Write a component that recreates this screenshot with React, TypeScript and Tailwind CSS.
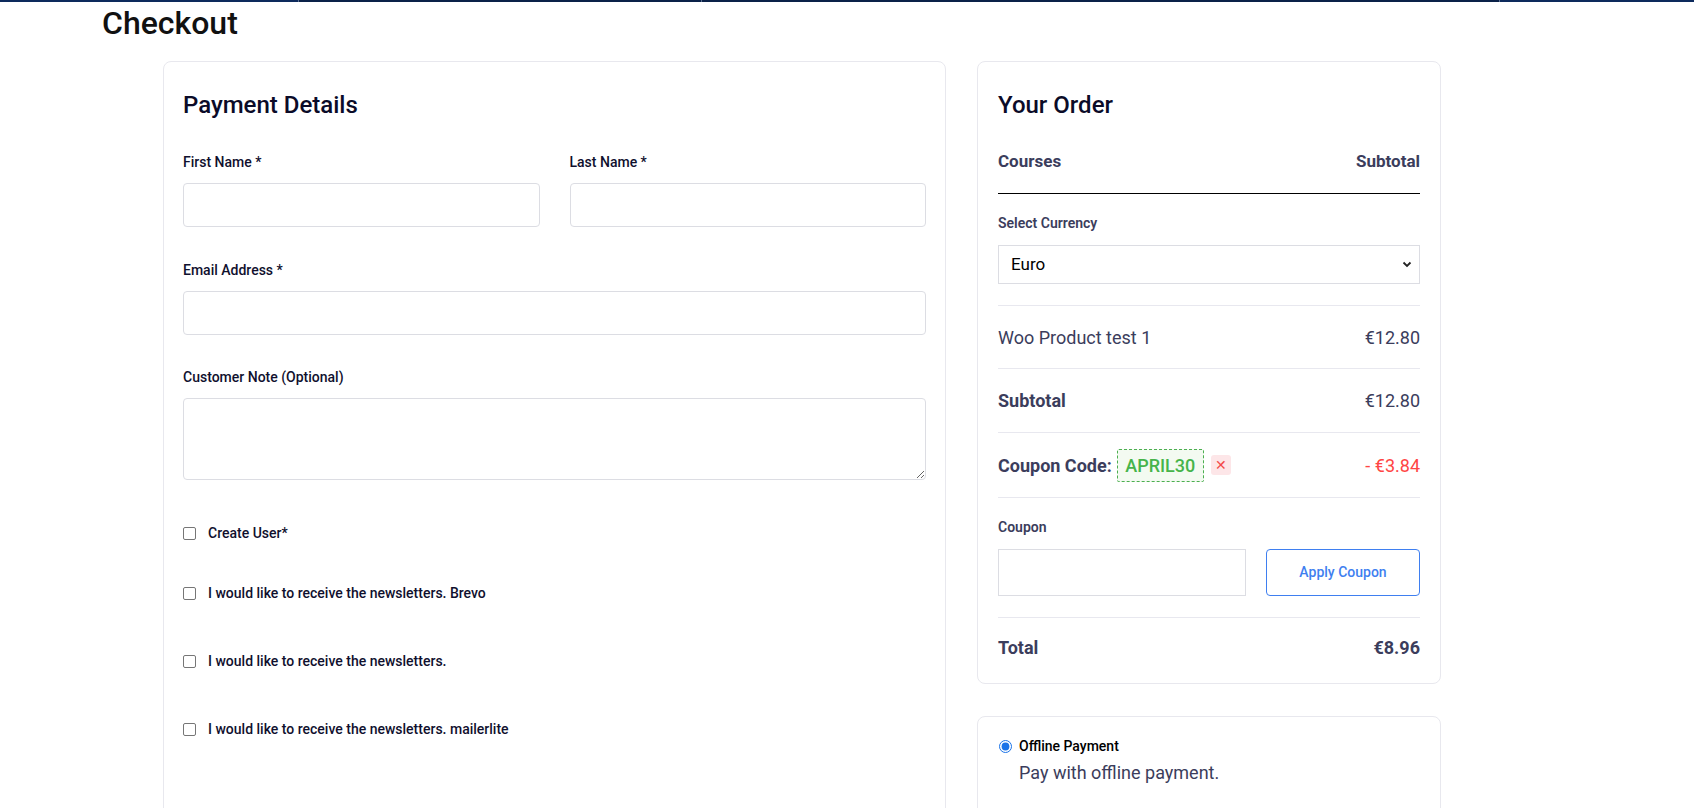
import React from 'react';

const inputCls =
  'block w-full h-[44px] rounded-[4px] border border-[#dcdde3] bg-white px-3 text-[16px] outline-none';

function Field({ label, children }: { label: string; children: React.ReactNode }) {
  return (
    <div className="flex flex-col gap-[11px]">
      <label className="text-[14px] leading-[20px] font-medium text-[#10102e]">{label}</label>
      {children}
    </div>
  );
}

function CheckRow({ label, className }: { label: string; className: string }) {
  return (
    <label className={`flex items-center gap-[12px] ${className}`}>
      <span className="w-[13px] h-[13px] rounded-[2px] border border-[#767676] bg-white shrink-0" />
      <span className="text-[14px] leading-[20px] font-medium text-[#10102e]">{label}</span>
    </label>
  );
}

function OrderRow({ left, right, className = '' }: { left: React.ReactNode; right: React.ReactNode; className?: string }) {
  return (
    <div className={`flex items-center justify-between border-t border-[#e8e8ef] ${className}`}>
      <div className="flex items-center">{left}</div>
      <div>{right}</div>
    </div>
  );
}

export default function App() {
  return (
    <div className="min-h-[808px] bg-white font-['Roboto',sans-serif] overflow-hidden">
      <div className="flex h-[2px] bg-[#0a2148]">
        <div className="w-[299px] bg-[#0d2a5c] border-r border-[#5b6f92]" />
        <div className="w-[403px] border-r border-[#5b6f92]" />
        <div className="w-[798px] border-r border-[#5b6f92]" />
        <div className="flex-1 bg-[#0d2a5c]" />
      </div>

      <h1 className="mt-[2px] pl-[102px] text-[32px] leading-[38px] font-medium text-[#111111]">Checkout</h1>

      <div className="mt-[19px] ml-[163px] flex items-start gap-[31px]">
        {/* Payment details */}
        <div className="w-[783px] rounded-[8px] border border-[#e8e8ee] px-[19px] pt-[27px] pb-[120px]">
          <h2 className="text-[24px] leading-[32px] font-medium text-[#0b0b28]">Payment Details</h2>

          <div className="mt-[31px] grid grid-cols-2 gap-x-[30px]">
            <Field label="First Name *">
              <input className={inputCls} />
            </Field>
            <Field label="Last Name *">
              <input className={inputCls} />
            </Field>
          </div>

          <div className="mt-[33px]">
            <Field label="Email Address *">
              <input className={inputCls} />
            </Field>
          </div>

          <div className="mt-[32px]">
            <Field label="Customer Note (Optional)">
              <textarea className="block w-full h-[82px] rounded-[4px] border border-[#dcdde3] bg-white px-3 py-2 outline-none" />
            </Field>
          </div>

          <CheckRow label="Create User*" className="mt-[43px]" />
          <CheckRow label="I would like to receive the newsletters. Brevo" className="mt-[40px]" />
          <CheckRow label="I would like to receive the newsletters." className="mt-[48px]" />
          <CheckRow label="I would like to receive the newsletters. mailerlite" className="mt-[48px]" />
        </div>

        {/* Order summary */}
        <div className="w-[464px] flex flex-col gap-[32px]">
          <div className="rounded-[8px] border border-[#e8e8ee] px-[20px] pt-[27px] pb-[7px] text-[#3b3d5c]">
            <h2 className="text-[24px] leading-[32px] font-medium text-[#0b0b28]">Your Order</h2>

            <div className="mt-[28px] pb-[20px] flex justify-between border-b border-black text-[17px] leading-[24px] font-bold">
              <span>Courses</span>
              <span>Subtotal</span>
            </div>

            <div className="pt-[19px] pb-[21px]">
              <div className="text-[14px] leading-[20px] font-semibold">Select Currency</div>
              <div className="relative mt-[12px]">
                <select className="block w-full h-[39px] appearance-none border border-[#dcdde3] bg-white pl-[12px] text-[17px] text-black outline-none">
                  <option>Euro</option>
                </select>
                <svg className="absolute right-[8px] top-[15px]" width="10" height="8" viewBox="0 0 10 8">
                  <path d="M1.5 2.5 L5 6 L8.5 2.5" fill="none" stroke="#222" strokeWidth="1.8" />
                </svg>
              </div>
            </div>

            <OrderRow
              className="h-[63px] text-[18px]"
              left={<span>Woo Product test 1</span>}
              right={<span>€12.80</span>}
            />
            <OrderRow
              className="h-[64px] text-[18px]"
              left={<span className="font-bold">Subtotal</span>}
              right={<span>€12.80</span>}
            />
            <OrderRow
              className="h-[65px] text-[18px]"
              left={
                <>
                  <span className="font-bold">Coupon Code:</span>
                  <span className="ml-[5px] flex h-[33px] w-[87px] items-center justify-center rounded-[2px] border border-dashed border-[#4caf50] bg-[#f3faf1] font-medium text-[#46b44a]">
                    APRIL30
                  </span>
                  <span className="ml-[7px] flex h-[20px] w-[20px] items-center justify-center rounded-[3px] bg-[#fde6e8] text-[14px] leading-none text-[#f44b4b]">
                    ✕
                  </span>
                </>
              }
              right={<span className="text-[#ff4545]">- €3.84</span>}
            />

            <div className="border-t border-[#e8e8ef] pt-[19px] pb-[21px]">
              <div className="text-[14px] leading-[20px] font-semibold">Coupon</div>
              <div className="mt-[12px] flex gap-[20px]">
                <input className="h-[47px] w-[248px] border border-[#dcdde3] bg-white px-3 outline-none" />
                <button className="h-[47px] flex-1 rounded-[4px] border border-[#3f7ff0] text-[14px] font-medium text-[#3f7ff0]">
                  Apply Coupon
                </button>
              </div>
            </div>

            <div className="flex h-[59px] items-center justify-between border-t border-[#e8e8ef] text-[18px] font-bold">
              <span>Total</span>
              <span>€8.96</span>
            </div>
          </div>

          <div className="h-[140px] rounded-[8px] border border-[#e8e8ee] px-[21px] pt-[19px]">
            <label className="flex items-center gap-[7px]">
              <input type="radio" checked readOnly className="m-0 h-[13px] w-[13px] accent-[#1a73e8]" />
              <span className="text-[14px] leading-[20px] font-medium text-black">Offline Payment</span>
            </label>
            <div className="pl-[20px] mt-[4px] text-[18px] leading-[26px] text-[#3b3d5c]">Pay with offline payment.</div>
          </div>
        </div>
      </div>
    </div>
  );
}
